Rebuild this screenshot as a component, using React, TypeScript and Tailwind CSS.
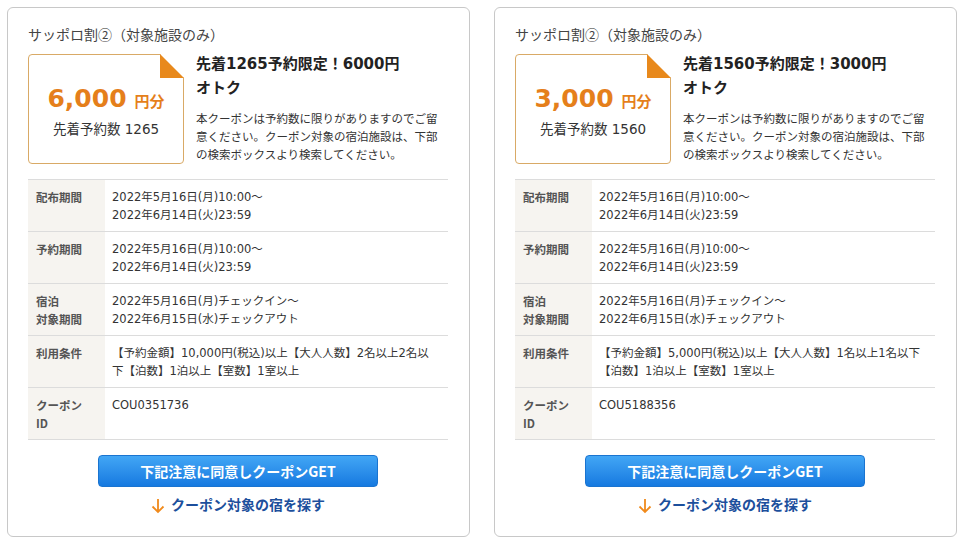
const jp = { fontFamily: '"Noto Sans CJK JP", "Noto Sans", sans-serif' }
const wide = { fontFamily: '"DejaVu Sans", "Noto Sans CJK JP", sans-serif' }

interface Coupon {
  amount: string
  count: string
  headline: string
  condition: string
  id: string
}

const coupons: Coupon[] = [
  {
    amount: '6,000',
    count: '1265',
    headline: '先着1265予約限定！6000円オトク',
    condition: '【予約金額】10,000円(税込)以上【大人人数】2名以上2名以下【泊数】1泊以上【室数】1室以上',
    id: 'COU0351736',
  },
  {
    amount: '3,000',
    count: '1560',
    headline: '先着1560予約限定！3000円オトク',
    condition: '【予約金額】5,000円(税込)以上【大人人数】1名以上1名以下【泊数】1泊以上【室数】1室以上',
    id: 'COU5188356',
  },
]

function Row({ label, children }: { label: React.ReactNode; children: React.ReactNode }) {
  return (
    <div className="flex h-[52px] border-b border-[#dcdcdc]">
      <div className="w-[77px] shrink-0 bg-[#f6f4f0] pl-2 pt-2 text-[11.5px] leading-[18px] font-bold text-[#555]">
        {label}
      </div>
      <div className="pl-[7px] pt-2 pr-[10px] text-[11.5px] leading-[18px] text-[#333]" style={wide}>
        {children}
      </div>
    </div>
  )
}

function CouponCard({ c }: { c: Coupon }) {
  return (
    <div className="w-[463px] h-[530px] shrink-0 rounded-[6px] border border-[#c8c8c8] bg-white pt-4 pl-[20px] pr-[21px]">
      <div className="text-[14px] leading-5 text-[#444]">サッポロ割②（対象施設のみ）</div>
      <div className="mt-[10px] flex gap-3">
        <div className="relative w-[156px] h-[110px] shrink-0 rounded-[4px] border border-[#d9aa66] flex flex-col items-center justify-center">
          <svg className="absolute -top-px -right-px" width="24" height="24" viewBox="0 0 24 24">
            <polygon points="0,0 24,24 24,0" fill="#ffffff" />
            <polygon points="0,0 24,24 0,24" fill="#e8891c" />
          </svg>
          <div className="flex items-baseline text-[#e57f1b] font-bold mt-1" style={wide}>
            <span className="text-[25px] leading-8">{c.amount}</span>
            <span className="ml-2 text-[15px]" style={jp}>円分</span>
          </div>
          <div className="mt-1 text-[13.5px] leading-5 text-[#333]" style={wide}>
            先着予約数 {c.count}
          </div>
        </div>
        <div className="w-[245px] -mt-[2px]">
          <div className="w-[212px] text-[15px] leading-6 font-bold text-[#222]" style={wide}>
            {c.headline}
          </div>
          <div className="mt-[9px] text-[11.5px] leading-[18px] text-[#333]">
            本クーポンは予約数に限りがありますのでご留意ください。クーポン対象の宿泊施設は、下部の検索ボックスより検索してください。
          </div>
        </div>
      </div>
      <div className="mt-[15px] border-t border-[#dcdcdc]">
        <Row label="配布期間">
          2022年5月16日(月)10:00～<br />2022年6月14日(火)23:59
        </Row>
        <Row label="予約期間">
          2022年5月16日(月)10:00～<br />2022年6月14日(火)23:59
        </Row>
        <Row label={<>宿泊<br />対象期間</>}>
          2022年5月16日(月)チェックイン～<br />2022年6月15日(水)チェックアウト
        </Row>
        <Row label="利用条件">{c.condition}</Row>
        <Row label={<>クーポン<br />ID</>}>{c.id}</Row>
      </div>
      <div className="mt-[15px] flex flex-col items-center">
        <button className="w-[280px] h-[32px] rounded-[4px] bg-gradient-to-b from-[#42a6f5] to-[#1579e0] text-white text-[14px] font-bold border border-[#1a74d0]">
          下記注意に同意しクーポンGET
        </button>
        <div className="mt-[7px] flex items-center gap-[6px] text-[14px] leading-5 font-bold text-[#1c4f9c]">
          <svg width="14" height="16" viewBox="0 0 14 16" className="mt-1">
            <path d="M7 1 V14 M1.5 8.5 L7 14 L12.5 8.5" fill="none" stroke="#f08a1c" strokeWidth="1.8" />
          </svg>
          <span>クーポン対象の宿を探す</span>
        </div>
      </div>
    </div>
  )
}

export default function App() {
  return (
    <div className="w-[964px] h-[544px] bg-white flex gap-[24px] pl-[7px] pt-[7px]" style={jp}>
      {coupons.map(c => (
        <CouponCard key={c.id} c={c} />
      ))}
    </div>
  )
}
